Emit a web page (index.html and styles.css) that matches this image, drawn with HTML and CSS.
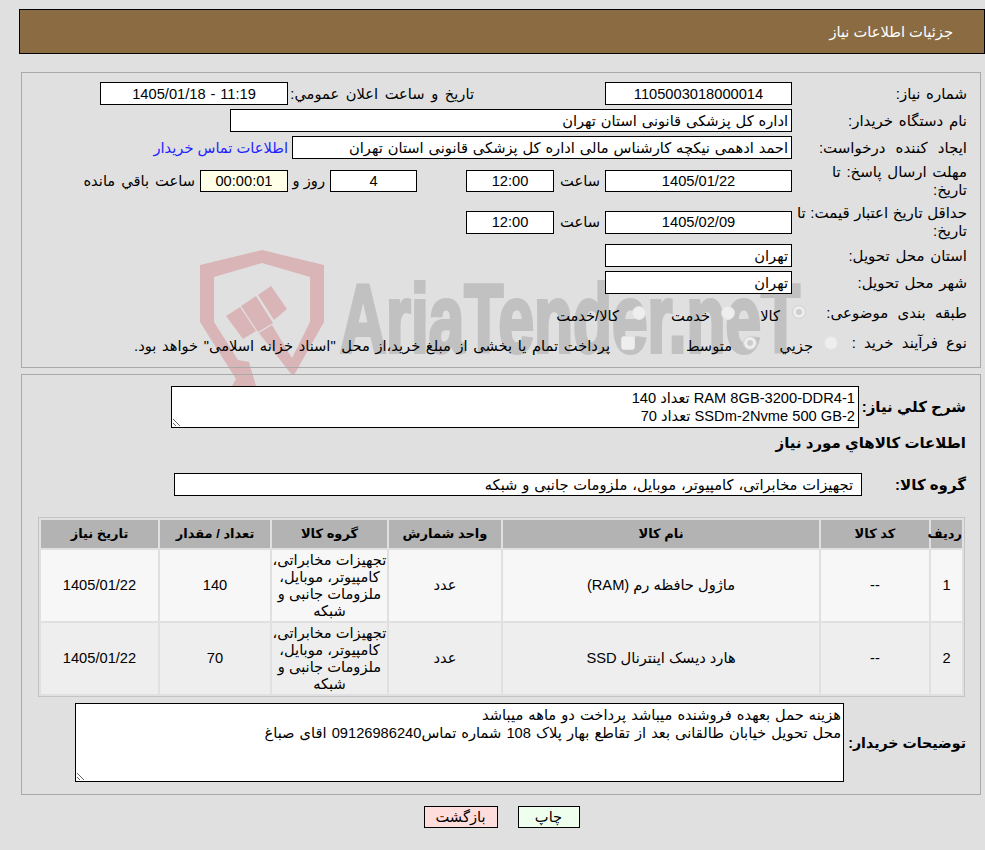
FILE: index.html
```html
<!DOCTYPE html>
<html lang="fa" dir="rtl">
<head>
<meta charset="utf-8">
<title>جزئیات اطلاعات نیاز</title>
<link rel="stylesheet" href="styles.css">
</head>
<body>
<svg class="watermark" width="985" height="400" viewBox="0 0 985 400" aria-hidden="true">
  <g class="wm-shield">
    <path d="M200 265 L262 250 L324 265 L324 322 L294 375 L288 366 L310 322 L310 277 L262 263 L214 277 L214 322 L238 360 L249 362 L256 386 L232 386 L236 379 L200 322 Z"/>
    <path d="M226 316 L240 307 L256 331 L243 339 Z"/>
    <path d="M241 306 L256 296 L273 323 L258 332 Z"/>
    <path d="M258 295 L271 286 L287 309 L274 320 Z"/>
    <path d="M259 333 L272 325 L298 368 L292 375 Z"/>
  </g>
  <text class="wm-text" x="340" y="352" textLength="460" lengthAdjust="spacingAndGlyphs" direction="ltr" unicode-bidi="bidi-override">AriaTender.neT</text>
</svg>

<header class="title-bar">جزئیات اطلاعات نیاز</header>

<section class="panel panel-top">
  <div class="row">
    <div class="label">شماره نیاز:</div>
    <div class="field w187 center">1105003018000014</div>
    <div class="pub-label">تاریخ و ساعت اعلان عمومي:</div>
    <div class="field w188 center">11:19 - 1405/01/18</div>
  </div>
  <div class="row">
    <div class="label">نام دستگاه خریدار:</div>
    <div class="field w562">اداره کل پزشکی قانونی استان تهران</div>
  </div>
  <div class="row">
    <div class="label label-wide">ایجاد کننده درخواست:</div>
    <div class="field w500">احمد ادهمی نیکچه کارشناس مالی اداره کل پزشکی قانونی استان تهران</div>
    <a class="contact" href="#">اطلاعات تماس خریدار</a>
  </div>
  <div class="row row-tall row-deadline">
    <div class="label">مهلت ارسال پاسخ: تا<br>تاریخ:</div>
    <div class="field w187 center short">1405/01/22</div>
    <div class="unit">ساعت</div>
    <div class="field w88 center short">12:00</div>
    <div class="field w87 center short days">4</div>
    <div class="unit-day">روز و</div>
    <div class="field w88 center short timer">00:00:01</div>
    <div class="unit-left">ساعت باقي مانده</div>
  </div>
  <div class="row row-tall row-validity">
    <div class="label label-tight">حداقل تاریخ اعتبار قیمت: تا<br>تاریخ:</div>
    <div class="field w187 center">1405/02/09</div>
    <div class="unit">ساعت</div>
    <div class="field w88 center">12:00</div>
  </div>
  <div class="row">
    <div class="label">استان محل تحویل:</div>
    <div class="field w187">تهران</div>
  </div>
  <div class="row">
    <div class="label">شهر محل تحویل:</div>
    <div class="field w187">تهران</div>
  </div>
  <div class="row row-choice">
    <div class="label label-choice">طبقه بندی موضوعی:</div>
    <input class="radio r-kala" type="radio" name="cat" checked disabled aria-label="کالا">
    <span class="opt o-kala">کالا</span>
    <input class="radio r-khedmat" type="radio" name="cat" disabled aria-label="خدمت">
    <span class="opt o-khedmat">خدمت</span>
    <input class="radio r-both" type="radio" name="cat" disabled aria-label="کالا/خدمت">
    <span class="opt">کالا/خدمت</span>
  </div>
  <div class="row row-choice">
    <div class="label label-type">نوع فرآیند خرید :</div>
    <input class="radio r-small" type="radio" name="type" disabled aria-label="جزیي">
    <span class="opt o-small">جزیي</span>
    <input class="radio r-mid" type="radio" name="type" checked disabled aria-label="متوسط">
    <span class="opt o-mid">متوسط</span>
    <input class="check" type="checkbox" disabled aria-label="اسناد خزانه">
    <span class="opt o-pay">پرداخت تمام یا بخشی از مبلغ خرید،از محل "اسناد خزانه اسلامی" خواهد بود.</span>
  </div>
</section>

<section class="panel panel-bottom">
  <div class="block-row">
    <div class="strong-label l-desc">شرح کلي نیاز:</div>
    <textarea class="area area-desc" readonly>1-RAM 8GB-3200-DDR4 تعداد 140
2-SSDm-2Nvme 500 GB تعداد 70</textarea>
  </div>
  <h2 class="heading">اطلاعات کالاهاي مورد نیاز</h2>
  <div class="block-row group-row">
    <div class="strong-label l-group">گروه کالا:</div>
    <div class="field group-field">تجهیزات مخابراتی، کامپیوتر، موبایل، ملزومات جانبی و شبکه</div>
  </div>
  <table class="items">
    <colgroup>
      <col class="c-row"><col class="c-code"><col class="c-name"><col class="c-unit"><col class="c-group"><col class="c-qty"><col class="c-date">
    </colgroup>
    <thead>
      <tr><th>ردیف</th><th>کد کالا</th><th>نام کالا</th><th>واحد شمارش</th><th>گروه کالا</th><th>تعداد / مقدار</th><th>تاریخ نیاز</th></tr>
    </thead>
    <tbody>
      <tr class="odd"><td>1</td><td>--</td><td>ماژول حافظه رم (RAM)</td><td>عدد</td><td>تجهیزات مخابراتی، کامپیوتر، موبایل، ملزومات جانبی و شبکه</td><td>140</td><td>1405/01/22</td></tr>
      <tr class="even"><td>2</td><td>--</td><td>هارد دیسک اینترنال SSD</td><td>عدد</td><td>تجهیزات مخابراتی، کامپیوتر، موبایل، ملزومات جانبی و شبکه</td><td>70</td><td>1405/01/22</td></tr>
    </tbody>
  </table>
  <div class="block-row note-row">
    <div class="strong-label l-note">توضیحات خریدار:</div>
    <textarea class="area area-note" readonly>هزینه حمل بعهده فروشنده میباشد پرداخت دو ماهه میباشد
محل تحویل خیابان طالقانی بعد از تقاطع بهار پلاک 108 شماره تماس09126986240 اقای صباغ</textarea>
  </div>
</section>

<div class="actions">
  <button class="btn btn-print" type="button">چاپ</button>
  <button class="btn btn-back" type="button">بازگشت</button>
</div>
</body>
</html>
```
FILE: styles.css
```css
* { box-sizing: border-box; }
html, body { margin: 0; padding: 0; }
body {
  position: relative;
  width: 985px;
  height: 850px;
  overflow: hidden;
  background: #e0e0e0;
  color: #000;
  font-family: "Liberation Sans", "DejaVu Sans", sans-serif;
  font-size: 14.67px;
  line-height: 18px;
  padding-top: 9px;
}
.watermark { position: absolute; left: 0; top: 0; z-index: 0; }
.wm-shield path { fill: #d9b5b7; }
.wm-text {
  font-family: "Liberation Sans", sans-serif;
  font-weight: 700;
  font-size: 97px;
  fill: #c1c1c1;
  stroke: #c1c1c1;
  stroke-width: 4px;
}
.title-bar, .panel, .actions { position: relative; z-index: 1; }
.title-bar {
  margin-left: 19px;
  height: 45px;
  border: 1px solid #000;
  background: #8b6c42;
  color: #fff;
  padding-right: 31px;
  display: flex;
  align-items: center;
}
.panel {
  margin-left: 21px;
  margin-right: 4px;
  border: 1px solid #a9a9a9;
}
.panel-top { margin-top: 18px; height: 296px; padding: 9px 13px 0 0; }
.panel-bottom { margin-top: 6px; height: 421px; padding: 11px 14px 0 0; }

.row { display: flex; align-items: center; height: 23px; margin-bottom: 4px; }
.row-tall { height: 36px; }
.row-validity { margin-top: 5px; }
.row-choice { height: 30px; margin-bottom: 0; }
.label { width: 175px; flex: none; padding-left: 4px; font-size: 15px; word-spacing: 1.5px; white-space: nowrap; }
.label-wide { word-spacing: 6px; }
.label-tight { word-spacing: 0.4px; padding-left: 0; }
.field {
  flex: none;
  height: 23px;
  border: 1px solid #000;
  background: #fff;
  padding: 0 3px;
  display: flex;
  align-items: center;
  white-space: nowrap;
  overflow: hidden;
  word-spacing: 0.8px;
}
.short { height: 22px; }
.center { justify-content: center; }
.w187 { width: 187px; }
.w188 { width: 188px; }
.w562 { width: 562px; }
.w500 { width: 500px; }
.w88 { width: 88px; }
.w87 { width: 87px; }
.pub-label { width: 317px; flex: none; padding-right: 131px; white-space: nowrap; word-spacing: 2.5px; }
.contact { color: #1f1fff; text-decoration: none; margin-right: 4px; white-space: nowrap; }
.unit { width: 51px; flex: none; padding-right: 5px; white-space: nowrap; }
.days { margin-right: 49px; }
.unit-day { width: 42px; flex: none; padding-right: 5px; white-space: nowrap; }
.timer { background: #ffffe8; }
.unit-left { padding-right: 5px; white-space: nowrap; word-spacing: 2px; }

.radio, .check {
  appearance: none;
  -webkit-appearance: none;
  flex: none;
  width: 14px;
  height: 14px;
  margin: 0;
  background: #eeeeee;
  border: 1px solid #e4e4e4;
}
.radio { border-radius: 50%; }
.radio:checked { background: #cdcdcd; box-shadow: inset 0 0 0 3px #eeeeee; border-color: #d6d6d6; }
.check { border-radius: 3px; }
.opt { white-space: nowrap; padding-top: 5px; flex: none; }
.label-choice { width: 161px; word-spacing: 5px; padding-left: 0; }
.r-kala { margin-left: 12px; margin-top: -2px; }
.o-kala { width: 45px; }
.r-khedmat { margin-left: 11px; }
.o-khedmat { width: 64px; }
.r-both { margin-left: 13px; }
.label-type { width: 129px; padding-left: 0; word-spacing: 4px; }
.r-small { margin-left: 11px; }
.o-small { width: 56px; }
.r-mid { margin-left: 11px; }
.o-mid { width: 97px; }
.check { margin-left: 11px; }
.o-pay { word-spacing: 1.6px; }

.block-row { display: flex; align-items: center; }
.strong-label { flex: none; font-weight: 700; font-size: 15px; white-space: nowrap; }
.l-desc { width: 107px; }
.l-group { width: 104px; }
.l-note { width: 122px; font-size: 14.2px; }
.area {
  display: block;
  flex: none;
  border: 1px solid #000;
  border-radius: 0;
  background: #fff;
  color: #000;
  font: inherit;
  padding: 2px;
  margin: 0;
  outline: none;
  overflow: hidden;
}
.area-desc { width: 688px; height: 42px; padding-right: 3px; }
.area-note { width: 769px; height: 79px; word-spacing: 1px; }
.heading { margin: 0; height: 45px; padding-top: 6px; font-size: 15px; line-height: 18px; font-weight: 700; }
.group-row { height: 23px; }
.group-field { width: 688px; padding-right: 8px; }

.items {
  margin: 21px 1px 0 0;
  width: 927px;
  table-layout: fixed;
  border: 1px solid #c4c4c4;
  border-spacing: 2px;
  border-collapse: separate;
  text-align: center;
}
.c-row { width: 31px; }
.c-code { width: 108px; }
.c-name { width: 316px; }
.c-unit { width: 112px; }
.c-group { width: 115px; }
.c-qty { width: 110px; }
.c-date { width: 117px; }
.items th { background: #b3b3b3; height: 28px; padding: 0; font-size: 13px; font-weight: 700; white-space: nowrap; }
.items td { height: 71px; padding: 0; line-height: 17px; font-size: 14.67px; }
.odd td { background: #f7f7f7; }
.even td { background: #eeeeee; }
.note-row { margin-top: 6px; }

.actions { display: flex; justify-content: center; gap: 20px; margin-top: 11px; padding-left: 18px; }
.btn {
  height: 22px;
  border: 1px solid #000;
  border-radius: 0;
  font: inherit;
  color: #000;
  padding: 0;
}
.btn-print { width: 62px; background: #eeffee; }
.btn-back { width: 74px; background: #ffdddd; }
```
